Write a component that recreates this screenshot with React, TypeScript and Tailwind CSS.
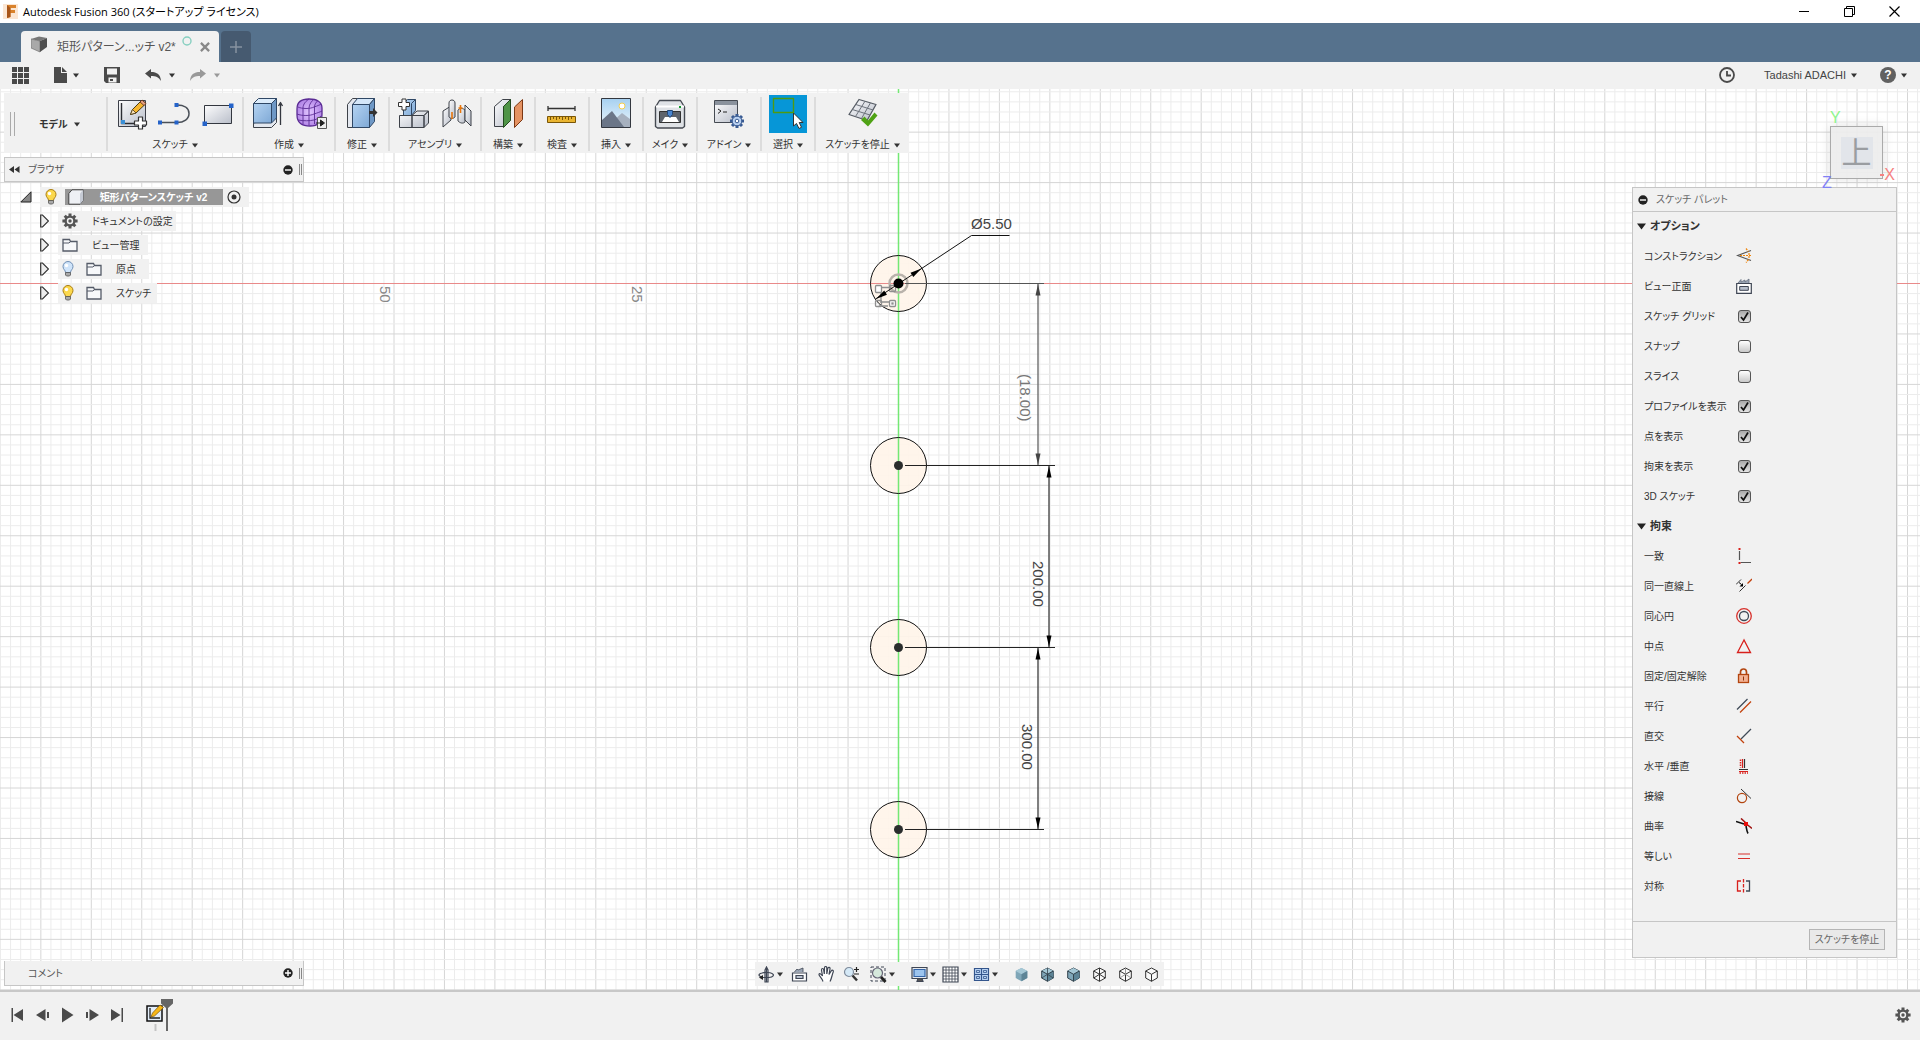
import React from "react";

type Kids = { children?: React.ReactNode };

/* ---------- small shared pieces ---------- */

function Caret({ className = "text-[#333]" }: { className?: string }) {
  return (
    <svg width="6" height="5" viewBox="0 0 6 5" className={className} aria-hidden="true">
      <path d="M0 0.5h6L3 4.5z" fill="currentColor" />
    </svg>
  );
}

function Gear({ size = 16, color = "#555" }: { size?: number; color?: string }) {
  return (
    <svg width={size} height={size} viewBox="0 0 16 16" aria-hidden="true">
      <g stroke={color} strokeWidth="3">
        <path d="M8 0.4v15.2M0.4 8h15.2M2.7 2.7l10.6 10.6M13.3 2.7L2.7 13.3" />
      </g>
      <circle cx="8" cy="8" r="4.4" fill="#f1f1f1" stroke={color} strokeWidth="2.4" />
      <circle cx="8" cy="8" r="1.7" fill={color} />
    </svg>
  );
}

function RoundSign({ plus }: { plus?: boolean }) {
  return (
    <svg width="10" height="10" viewBox="0 0 10 10" aria-hidden="true">
      <circle cx="5" cy="5" r="4.7" fill="#222" />
      <path d={plus ? "M2 5h6M5 2v6" : "M2 5h6"} stroke="#fff" strokeWidth="1.4" />
    </svg>
  );
}

function Grip() {
  return <span className="h-[11px] w-[3px] border-x border-[#888]" />;
}

/* ---------- ribbon icons ---------- */

function Icon32({ children }: Kids) {
  return (
    <svg width="34" height="34" viewBox="0 0 34 34" aria-hidden="true" strokeLinejoin="round">
      {children}
    </svg>
  );
}

function Gradients() {
  return (
    <svg width="0" height="0" className="absolute" aria-hidden="true">
      <defs>
        <linearGradient id="steel" x1="0" y1="0" x2="1" y2="1">
          <stop offset="0" stopColor="#fdfdfe" />
          <stop offset="1" stopColor="#b9bec9" />
        </linearGradient>
        <linearGradient id="blue" x1="0" y1="0" x2="1" y2="1">
          <stop offset="0" stopColor="#b4d3f2" />
          <stop offset="1" stopColor="#7fa9d6" />
        </linearGradient>
        <linearGradient id="sky" x1="0" y1="0" x2="0" y2="1">
          <stop offset="0" stopColor="#a6d0f0" />
          <stop offset="1" stopColor="#eef7fc" />
        </linearGradient>
        <radialGradient id="violet">
          <stop offset="0" stopColor="#e2c6ff" />
          <stop offset="1" stopColor="#b488e8" />
        </radialGradient>
      </defs>
    </svg>
  );
}

const SketchIcon = () => (
  <Icon32>
    <rect x="3.5" y="3.5" width="27" height="26" fill="url(#steel)" stroke="#3c3f48" />
    <path d="M6.5 6v20.5H28" fill="none" stroke="#2b2d33" strokeWidth="1.4" />
    <rect x="6" y="23" width="4" height="4" fill="#3a8fd6" />
    <path d="M15.5 17.5l2-5L27 3l4 3.5-10 9.5z" fill="#f5b52e" stroke="#4b3a12" />
    <path d="M25 5l4 3.5L31 6.500 27 3z" fill="#e7a183" stroke="#5b2d1b" strokeWidth=".8" />
    <path d="M15.5 17.5l2-5 3.5 3.5z" fill="#fbe3bb" stroke="#4b3a12" strokeWidth=".8" />
    <path d="M23.5 20h4v4h4v4h-4v4h-4v-4h-4v-4h4z" fill="#fff" stroke="#333" strokeWidth="1.2" />
  </Icon32>
);

const LineArcIcon = () => (
  <Icon32>
    <path d="M2 25.5h17M19 8c7 0 12 3 12 8.500s-5 9-12 9" fill="none" stroke="#4a5058" strokeWidth="1.5" />
    <path d="M0 23.5h4v4H0zM16.5 23.5h4v4h-4zM16.5 6h4v4h-4z" fill="#2563c9" />
  </Icon32>
);

const RectIcon = () => (
  <Icon32>
    <rect x="3.5" y="8.5" width="27" height="18" fill="url(#steel)" stroke="#33373f" />
    <path d="M1.5 24.5h4.500V29H1.500zM28 6.500h4.500V11H28z" fill="#2563c9" />
  </Icon32>
);

const ExtrudeIcon = () => (
  <Icon32>
    <path d="M2.5 26v4.500h18l5-5V21z" fill="#e4e8ef" stroke="#3d4148" />
    <path d="M2.5 6.500l5-5h18l-5 5z" fill="#dcecfb" stroke="#2f4765" />
    <path d="M2.5 6.500h18V26h-18z" fill="url(#blue)" stroke="#2f4765" />
    <path d="M20.5 6.500l5-5V21l-5 5z" fill="#6e98c6" stroke="#2f4765" />
    <path d="M29.5 28V7M27.5 9l2-3.5 2 3.5" fill="none" stroke="#33373f" strokeWidth="1.3" />
  </Icon32>
);

const FormIcon = () => (
  <Icon32>
    <path d="M3 12c0-7 4-10 12-10s13 3 13 9v6c0 8-4 12-12 12S3 26 3 18z" fill="url(#violet)" stroke="#5a2b94" strokeWidth="1.3" />
    <path d="M4 10c4 2 12 2 16 0 3-1 6-2 7-3M3 17c5 2 13 2 17 0 3-1 6-2 8-3M4 23c5 1 12 1 16 0 3-1 5-2 7-4M9 27V11c0-4 3-7 6-9M15 28V11c0-4 3-7 5-9M20.5 27V10c0-3 2-5 3-6" fill="none" stroke="#5a2b94" strokeWidth=".9" />
    <rect x="23.5" y="20.5" width="9" height="11" fill="#eee" stroke="#555" />
    <path d="M22 26h5M26.5 23l4 3-4 3z" fill="#222" stroke="#222" />
  </Icon32>
);

const PressPullIcon = () => (
  <Icon32>
    <path d="M2.500 7.500l5-6h6l-5 6v23h-6z" fill="#e4e8ef" stroke="#3d4148" />
    <path d="M7.500 7.500l5-6h17l-5 6z" fill="#d4e6f8" stroke="#2f4765" />
    <path d="M7.500 7.500h17v23h-17z" fill="url(#blue)" stroke="#2f4765" />
    <path d="M24.500 7.500l5-6v23l-5 6z" fill="#6e98c6" stroke="#2f4765" />
    <path d="M24 14h4v-3l4.500 4.500L28 20v-3h-4z" fill="#333" />
  </Icon32>
);

const ComponentIcon = () => (
  <Icon32>
    <path d="M6.500 6.500l4-4h8v11l-4 5h-8z" fill="url(#blue)" stroke="#2f4765" />
    <path d="M14.500 6.500l4-4M14.500 6.500v12" fill="none" stroke="#2f4765" />
    <path d="M2.500 18.500h12.500v12H2.500zM15 18.500l5-4.500h11.500l-4.500 4.500zM15 18.500h12v12H15zM27 18.500l4.500-4.500v12l-4.500 4.500z" fill="url(#steel)" stroke="#3d4148" />
    <path d="M5 2h4v3.500h3.500v4H9V13H5V9.500H1.500v-4H5z" fill="#fff" stroke="#333" />
  </Icon32>
);

const JointIcon = () => (
  <Icon32>
    <path d="M3 14l8-5v14l-8 7z" fill="url(#steel)" stroke="#3d4148" />
    <path d="M9 6c0-4 6-4 6 0v14c-2 2-4 2-6 0z" fill="url(#steel)" stroke="#3d4148" />
    <path d="M18 13c2-2 5-2 7 0v12c-2 2-5 1-7-1z" fill="url(#steel)" stroke="#3d4148" />
    <path d="M25 8l6 6v15l-6-6z" fill="url(#steel)" stroke="#3d4148" />
    <path d="M12 15v7M20.500 8v8M18.500 11h4" stroke="#e8760c" strokeWidth="1.600" />
  </Icon32>
);

const PlaneIcon = () => (
  <Icon32>
    <path d="M3.500 9.500l8-7h8l-7 7v20h-9z" fill="url(#steel)" stroke="#3d4148" />
    <path d="M12.500 9.500l7-7v21l-7 7z" fill="#4f9447" stroke="#23491f" />
    <path d="M23.500 10l8-7.500v20l-8 8z" fill="#e59363" stroke="#7c3713" />
  </Icon32>
);

const MeasureIcon = () => (
  <Icon32>
    <path d="M3 11.500h27M3 9v5M30 9v5" stroke="#333" strokeWidth="1.300" />
    <rect x="2.500" y="19.500" width="28" height="6" fill="#eab531" stroke="#7a5607" />
    <path d="M5.500 20v3M8.500 20v2M11.500 20v3M14.500 20v2M17.500 20v3M20.500 20v2M23.500 20v3M26.500 20v2" stroke="#7a5607" />
  </Icon32>
);

const ImageIcon = () => (
  <Icon32>
    <rect x="2.500" y="1.500" width="29" height="29" fill="url(#sky)" stroke="#33373f" />
    <circle cx="23" cy="9" r="3" fill="#fff" stroke="#f5ce4e" />
    <path d="M14 24l9-8 8 6v8H14z" fill="#a7b1bf" />
    <path d="M3 23l10-9 12 16H3z" fill="#6b7688" />
  </Icon32>
);

const PrintIcon = () => (
  <Icon32>
    <path d="M2.500 10l4-6.500h21l4 6.500v19.500l-2 1.500h-25l-2-1.500z" fill="#dfe2e6" stroke="#454a52" strokeWidth="1.400" />
    <path d="M3 9.500h28" stroke="#fff" strokeWidth="2" />
    <path d="M6.500 14.500h21v11h-21z" fill="#5e646d" stroke="#333" />
    <path d="M9 25l3-5h11l3 5z" fill="#fff" />
    <path d="M14.500 13.500h5v4l-2.500 3-2.500-3z" fill="#4a86d0" stroke="#234878" />
    <rect x="26" y="9" width="2" height="2" fill="#119a2c" />
  </Icon32>
);

const AddinIcon = () => (
  <Icon32>
    <rect x="2.500" y="3.500" width="23" height="22" fill="url(#steel)" stroke="#454a52" />
    <rect x="3" y="4" width="22" height="4" fill="#8a929d" />
    <path d="M6 12l3 2-3 2.500M11 15h4" fill="none" stroke="#222" />
    <g stroke="#395b93" strokeWidth="3">
      <path d="M25 17v14M18 24h14M20 19l10 10M30 19L20 29" />
    </g>
    <circle cx="25" cy="24" r="4.800" fill="#b9d0f0" stroke="#395b93" />
    <circle cx="25" cy="24" r="1.800" fill="#fff" stroke="#395b93" />
  </Icon32>
);

const SelectIcon = () => (
  <Icon32>
    <rect x="2.500" y="1.500" width="20" height="14" fill="none" stroke="#4f9a10" strokeWidth="1.400" />
    <path d="M22.500 16v13l3-2.500 2.500 5 2.500-1.200-2.300-4.800h3.800z" fill="#fff" stroke="#333" />
  </Icon32>
);

const StopSketchIcon = () => (
  <Icon32>
    <path d="M13 2.500l17 5-9 16-18-6z" fill="url(#steel)" stroke="#555b64" strokeWidth="1.300" />
    <path d="M9.800 7.500L27 13M6.300 12.500L24 18M19 4.200L9.500 19.500M24.500 5.800L15.500 21.500" stroke="#6c727b" fill="none" />
    <path d="M15 23l3.500-3.500 3.500 4 6.500-8 3 3-9.500 11z" fill="#4fa214" />
  </Icon32>
);

/* ---------- ribbon ---------- */

const groups: { label: string; width: string; on?: boolean; icons: React.FC[] }[] = [
  { label: "スケッチ", width: "w-[136px]", icons: [SketchIcon, LineArcIcon, RectIcon] },
  { label: "作成", width: "w-[92px]", icons: [ExtrudeIcon, FormIcon] },
  { label: "修正", width: "w-[54px]", icons: [PressPullIcon] },
  { label: "アセンブリ", width: "w-[92px]", icons: [ComponentIcon, JointIcon] },
  { label: "構築", width: "w-[54px]", icons: [PlaneIcon] },
  { label: "検査", width: "w-[54px]", icons: [MeasureIcon] },
  { label: "挿入", width: "w-[54px]", icons: [ImageIcon] },
  { label: "メイク", width: "w-[54px]", icons: [PrintIcon] },
  { label: "アドイン", width: "w-[64px]", icons: [AddinIcon] },
  { label: "選択", width: "w-[54px]", on: true, icons: [SelectIcon] },
  { label: "スケッチを停止", width: "w-[95px]", icons: [StopSketchIcon] },
];

function Ribbon() {
  return (
    <div className="mt-1 ml-1 flex h-[60px] bg-[#f1f1f1] pt-1 pb-0.5">
      <div className="flex w-[102px] items-center pl-1.5">
        <span className="h-6 w-[5px] border-x border-[#aaa]" />
        <button className="ml-6 flex items-center gap-1.5 text-[10px] font-bold">
          モデル <Caret />
        </button>
      </div>
      {groups.map((g) => (
        <div
          key={g.label}
          className={`flex flex-col items-center justify-between border-l-2 border-[#dcdcdc] ${g.width}`}
        >
          <div className="-mt-0.5 flex gap-[5px]">
            {g.icons.map((I, i) => (
              <button
                key={i}
                aria-label={g.label}
                className={`flex size-[38px] items-center justify-center ${g.on ? "bg-[#0696d7]" : ""}`}
              >
                <I />
              </button>
            ))}
          </div>
          <button className="flex items-center gap-1 text-[10px] leading-3 whitespace-nowrap">
            {g.label} <Caret />
          </button>
        </div>
      ))}
    </div>
  );
}

function ViewCube() {
  return (
    <div className="relative mt-[37px] mr-[37px] size-[53px]">
      <button className="flex size-full items-center justify-center border border-[#aaa] bg-[#ececec]/90 shadow-[0_0_10px_rgba(0,0,0,0.12)]">
        <span className="flex size-8 items-center justify-center bg-[#e2e5ea] text-[30px] leading-none text-[#9a9da1]">上</span>
      </button>
      <span className="absolute -top-4 left-0 text-base leading-4 text-[#8df58d]">Y</span>
      <span className="absolute -bottom-3 -left-2 text-base leading-4 text-[#8181f5]">Z</span>
      <span className="absolute -right-3 -bottom-1 text-base leading-4 text-[#f58181]">
        <i className="absolute top-[7px] -left-1 h-0.5 w-1 bg-[#f58181]" />X
      </span>
    </div>
  );
}

/* ---------- sketch canvas ---------- */

const OX = 898.5;
const OY = 283.5;
const STEP = 10.09;
const range = (a: number, b: number) => Array.from({ length: b - a + 1 }, (_, i) => a + i);

function Arrow({ x, y, angle, fill = "#000" }: { x: number; y: number; angle: number; fill?: string }) {
  return <path d="M0 0L-2.500 11.500H2.500z" fill={fill} transform={`translate(${x} ${y}) rotate(${angle})`} />;
}

function SketchCanvas() {
  const cols = range(-89, 180);
  const rows = range(-20, 130);
  return (
    <svg className="absolute inset-0 size-full" aria-label="スケッチ">
      <g transform="translate(0 -89)">
        {cols.map((c) => (
          <path key={c} d={`M${OX + c * STEP} 0V1600`} stroke={c % 5 ? "#ececec" : "#d6d6d6"} />
        ))}
        {rows.map((r) => (
          <path key={r} d={`M0 ${OY + r * STEP}H2800`} stroke={r % 5 ? "#ececec" : "#d6d6d6"} />
        ))}
        {[283.5, 465.5, 647.5, 829.5].map((y) => (
          <circle key={y} cx={OX} cy={y} r="28" fill="#fff4e9" fillOpacity=".9" />
        ))}
        <path d="M0 283.500H2800" stroke="#e98a8a" />
        <path d="M898.500 0V1600" stroke="#74e874" strokeWidth="1.500" />
        {[283.5, 465.5, 647.5, 829.5].map((y) => (
          <circle key={y} cx={OX} cy={y} r="28" fill="none" stroke="#111" />
        ))}
        {[465.5, 647.5, 829.5].map((y) => (
          <circle key={y} cx={OX} cy={y} r="4.500" fill="#2a2d2d" />
        ))}

        <g fill="none" stroke="#8f8f8f" strokeWidth="1.300">
          <circle cx={OX} cy={OY} r="9" stroke="#b9b2ab" strokeWidth="2.500" />
          <path d="M881 287.500h10M881 291v10M880 302h10M879 306h9" />
          <rect x="875.500" y="285.500" width="6" height="7" rx="1" fill="#fff" />
          <rect x="889.500" y="285.500" width="6" height="6" rx="1" />
          <rect x="875.500" y="300.500" width="6" height="6" rx="1" />
          <rect x="889.500" y="300.500" width="6" height="6" rx="1" fill="#fff" />
          <rect x="892" y="303" width="1" height="1" />
        </g>
        <path d="M875.500 299L971.500 235.500H1009.500" fill="none" stroke="#111" />
        <Arrow x={921.5} y={268.5} angle={56.5} />
        <Arrow x={876} y={299} angle={236.5} />
        <circle cx={OX} cy={OY} r="5" fill="#000" />

        <g stroke="#222">
          <path d="M905 283.500h139" stroke="#555" />
          <path d="M905 465.500h150M905 647.500h150M905 829.500h139" />
          <path d="M1038 284v181" stroke="#777" strokeWidth="1.500" />
          <path d="M1049 466v181M1038 648v181" stroke="#555" strokeWidth="1.500" />
        </g>
        <Arrow x={1038} y={284} angle={0} fill="#444" />
        <Arrow x={1038} y={465} angle={180} fill="#444" />
        <Arrow x={1049} y={466} angle={0} />
        <Arrow x={1049} y={647} angle={180} />
        <Arrow x={1038} y={648} angle={0} />
        <Arrow x={1038} y={829} angle={180} />

        <g fontSize="15" fill="#444">
          <text x="971" y="229">Ø5.50</text>
          <text transform="translate(1020 374) rotate(90)" fill="#777">(18.00)</text>
          <text transform="translate(1033 561) rotate(90)">200.00</text>
          <text transform="translate(1022 724) rotate(90)">300.00</text>
          <text transform="translate(380 286) rotate(90)" fill="#888">50</text>
          <text transform="translate(632 286) rotate(90)" fill="#888">25</text>
        </g>
      </g>
    </svg>
  );
}

/* ---------- browser tree ---------- */

const Folder = () => (
  <svg width="16" height="14" viewBox="0 0 16 14" aria-hidden="true">
    <path d="M1 13V1.500h6.500l1 2H15V13z" fill="#f7f8fa" stroke="#555b68" strokeWidth="1.300" />
    <path d="M1 5h6l1.500-1.500" fill="none" stroke="#555b68" />
  </svg>
);

const Bulb = ({ on }: { on?: boolean }) => (
  <svg width="12" height="16" viewBox="0 0 12 16" aria-hidden="true">
    <path d="M3.500 11.500C3.500 9 1 8.500 1 5.500a5 5 0 0110 0c0 3-2.500 3.500-2.500 6z" fill={on ? "#fbd84d" : "#cfe4fa"} stroke={on ? "#a97c12" : "#6f8fb5"} />
    <circle cx="4.500" cy="4.500" r="1.700" fill="#fff" />
    <path d="M3.500 11.500h5v2.500l-1 1h-3l-1-1z" fill="#aaa" stroke="#555" strokeWidth=".8" />
  </svg>
);

const Expander = () => (
  <button aria-label="展開" className="mr-2.5 flex w-2">
    <svg width="9" height="14" viewBox="0 0 9 14" className="shrink-0" aria-hidden="true">
      <path d="M.7 1h1.800l6 6-6 6H.7z" fill="#eee" stroke="#333" strokeWidth="1.200" />
    </svg>
  </button>
);

const rowsTree = [
  { label: "ドキュメントの設定", icons: <Gear />, width: "w-[118px]" },
  { label: "ビュー管理", icons: <Folder />, width: "w-[90px]" },
  { label: "原点", icons: <><Bulb /><Folder /></>, width: "w-[91px]" },
  { label: "スケッチ", icons: <><Bulb on /><Folder /></>, width: "w-[99px]" },
];

function BrowserTree() {
  return (
    <ul className="mt-[5px] flex flex-col gap-1 text-[10px]">
      <li className="flex h-5 items-center pl-4">
        <button aria-label="折りたたむ" className="mr-2 w-3">
          <svg width="12" height="12" viewBox="0 0 12 12" aria-hidden="true">
            <path d="M11 .8V11H.8z" fill="#888" stroke="#222" />
          </svg>
        </button>
        <div className="flex h-5 items-center bg-[#f1f1f1] pr-2 pl-[5px]">
          <Bulb on />
          <div className="ml-2 flex h-4 w-[158px] items-center bg-[#979797] pl-[3px] font-bold text-white">
            <svg width="16" height="16" viewBox="0 0 16 16" aria-hidden="true">
              <path d="M.8 4.500L4 .8h11.200v10.700L12 15.200H.8z" fill="#eef0f4" stroke="#444" />
              <path d="M12 4.500l3.200-3.700v10.700L12 15.200z" fill="#c5cad4" />
            </svg>
            <span className="flex-1 text-center whitespace-nowrap">矩形パターンスケッチ v2</span>
          </div>
          <svg className="ml-1" width="14" height="14" viewBox="0 0 14 14" aria-hidden="true">
            <circle cx="7" cy="7" r="6" fill="none" stroke="#333" strokeWidth="1.200" />
            <circle cx="7" cy="7" r="2.500" fill="#333" />
          </svg>
        </div>
      </li>
      {rowsTree.map((r) => (
        <li key={r.label} className="flex h-5 items-center pl-9">
          <Expander />
          <div className={`flex h-5 items-center gap-3 bg-[#f1f1f1] pl-1 whitespace-nowrap ${r.width}`}>
            {r.icons}
            <span className="pl-0.5">{r.label}</span>
          </div>
        </li>
      ))}
    </ul>
  );
}

/* ---------- sketch palette ---------- */

function Icon16({ children }: Kids) {
  return (
    <svg width="16" height="16" viewBox="0 0 16 16" fill="none" aria-hidden="true">
      {children}
    </svg>
  );
}

const FaceIcon = () => (
  <Icon16>
    <path d="M.7 5.500h14.600v9.800H.7z" fill="#fff" stroke="#3f4654" strokeWidth="1.200" />
    <path d="M3.700 8.500h8.600v3.800H3.700z" fill="#b7bfcc" stroke="#3f4654" />
    <path d="M2 5l3-3.500V4l4-2v2l4-3v4" fill="#9aa5b5" stroke="#667080" strokeWidth=".8" />
  </Icon16>
);

const options: { label: string; icon?: React.ReactNode; checked?: boolean }[] = [
  {
    label: "コンストラクション",
    icon: (
      <Icon16>
        <path d="M15 2.500L1.500 7.500 15 12.500" stroke="#555" strokeWidth="1.200" />
        <path d="M4 7.500h12" stroke="#f0860c" strokeWidth="1.200" strokeDasharray="2 1" />
        <path d="M10 .5l2.500 3M12.500 11.500L10 14.500M13 5v5" stroke="#f0860c" strokeWidth="1.200" strokeDasharray="2 1" />
      </Icon16>
    ),
  },
  { label: "ビュー正面", icon: <FaceIcon /> },
  { label: "スケッチ グリッド", checked: true },
  { label: "スナップ", checked: false },
  { label: "スライス", checked: false },
  { label: "プロファイルを表示", checked: true },
  { label: "点を表示", checked: true },
  { label: "拘束を表示", checked: true },
  { label: "3D スケッチ", checked: true },
];

const constraints: { label: string; art: React.ReactNode }[] = [
  {
    label: "一致",
    art: (
      <>
        <path d="M3.500 3v9M4.500 14.500H15" stroke="#555" strokeWidth="1.200" />
        <path d="M2.500 0h2v2h-2zM2.500 14h2v2h-2z" fill="#d8201c" />
      </>
    ),
  },
  {
    label: "同一直線上",
    art: (
      <>
        <path d="M0 6.500l5-5M3.500 13.500l6-6" stroke="#333" />
        <path d="M11.500 5.500l4.500-4.500" stroke="#c2410c" strokeWidth="1.300" />
        <path d="M3 4.500l2.500 2" stroke="#000" />
        <path d="M7 5v3.500H3.500z" fill="#000" />
      </>
    ),
  },
  {
    label: "同心円",
    art: (
      <>
        <circle cx="8" cy="8" r="7.300" stroke="#d8312c" strokeWidth="1.300" />
        <circle cx="8" cy="8" r="4.500" stroke="#3f4a57" strokeWidth="1.300" />
      </>
    ),
  },
  { label: "中点", art: <path d="M8 2L1.500 14.500h13z" stroke="#d8201c" strokeWidth="1.300" /> },
  {
    label: "固定/固定解除",
    art: (
      <>
        <path d="M4.500 7V4c0-4 6-4 6 0v3" stroke="#b3450f" strokeWidth="1.700" />
        <rect x="2.500" y="6.500" width="10" height="8" fill="#f3b193" stroke="#b3450f" strokeWidth="1.300" />
        <path d="M7.500 8.500v4" stroke="#8f3308" />
      </>
    ),
  },
  {
    label: "平行",
    art: (
      <>
        <path d="M1 11.500L11.500 1" stroke="#3f4a57" strokeWidth="1.200" />
        <path d="M4 14.500L15 3.500" stroke="#c2410c" strokeWidth="1.200" />
      </>
    ),
  },
  {
    label: "直交",
    art: (
      <>
        <path d="M5 11L15 1" stroke="#3f4a57" strokeWidth="1.200" />
        <path d="M1 8l7 7" stroke="#c2410c" strokeWidth="1.300" />
      </>
    ),
  },
  {
    label: "水平 /垂直",
    art: (
      <>
        <path d="M8.500 1v9M3 11.500h9" stroke="#333" strokeWidth="1.200" />
        <path d="M6.500 1v9M3 13.500h9" stroke="#d8201c" strokeWidth="1.200" />
        <path d="M4.500 1.500v8M3.500 15h8.500" stroke="#d8201c" strokeWidth="1.500" strokeDasharray="1.500 1" />
      </>
    ),
  },
  {
    label: "接線",
    art: (
      <>
        <circle cx="6" cy="10" r="4.600" stroke="#b3450f" strokeWidth="1.200" />
        <path d="M5 1l10 9.500" stroke="#333" />
      </>
    ),
  },
  {
    label: "曲率",
    art: (
      <>
        <path d="M0 3.500l8 2.500M10 8c.5 2 .500 5 2 7.500" stroke="#111" strokeWidth="1.600" />
        <path d="M5 .5l5 4.500M11 6.500l5 4" stroke="#a01512" strokeWidth="1.600" />
        <path d="M8 4h4v4H8z" fill="#e80e0a" />
      </>
    ),
  },
  { label: "等しい", art: <path d="M2 6h12M2 10.500h12" stroke="#d8312c" strokeWidth="1.200" /> },
  {
    label: "対称",
    art: (
      <>
        <path d="M5 3H1.500v10H5" stroke="#d8201c" strokeWidth="1.300" />
        <path d="M10 3h3.500v10H10" stroke="#3f4a57" strokeWidth="1.300" />
        <path d="M7.500 1v14" stroke="#d8201c" strokeWidth="1.300" strokeDasharray="3.500 1.500" />
      </>
    ),
  },
];

function Check({ id, checked }: { id: string; checked: boolean }) {
  return (
    <span className="relative flex size-4 items-center justify-center">
      <input
        id={id}
        type="checkbox"
        defaultChecked={checked}
        className="peer size-[13px] appearance-none rounded-[3px] border border-[#555] bg-linear-to-b from-white to-[#c9c9c9] checked:from-[#aaa] checked:to-[#e4e4e4]"
      />
      <svg className="pointer-events-none absolute hidden peer-checked:block" width="11" height="11" viewBox="0 0 11 11" aria-hidden="true">
        <path d="M2 6l2.500 3L9 1.500" fill="none" stroke="#111" strokeWidth="1.700" />
      </svg>
    </span>
  );
}

function SectionTitle({ children }: Kids) {
  return (
    <h2 className="h-[30px] text-[11px] font-bold">
      <button className="flex h-full items-center gap-1 pl-1">
        <svg width="9" height="7" viewBox="0 0 9 7" aria-hidden="true">
          <path d="M0 .5h9L4.500 6.500z" fill="#222" />
        </svg>
        {children}
      </button>
    </h2>
  );
}

const rowClass = "flex h-[30px] items-center pl-[11px]";
const labelClass = "w-[92px] whitespace-nowrap";

function Palette() {
  return (
    <section className="mt-[34px] mr-[23px] mb-7 flex w-[265px] flex-col self-stretch border border-[#c6c6c6] bg-[#f1f1f1] text-[10px]">
      <header className="flex h-6 shrink-0 items-center gap-2 border-b border-[#c6c6c6] pl-[5px] text-[#666]">
        <button aria-label="閉じる"><RoundSign /></button>
        スケッチ パレット
      </header>
      <div className="-mt-px flex-1 overflow-hidden">
        <SectionTitle>オプション</SectionTitle>
        {options.map((o, i) => (
          <div key={o.label} className={rowClass}>
            <label htmlFor={`opt${i}`} className={labelClass}>{o.label}</label>
            {o.icon ? (
              <button id={`opt${i}`}>{o.icon}</button>
            ) : (
              <Check id={`opt${i}`} checked={!!o.checked} />
            )}
          </div>
        ))}
        <SectionTitle>拘束</SectionTitle>
        {constraints.map((c, i) => (
          <div key={c.label} className={rowClass}>
            <label htmlFor={`con${i}`} className={labelClass}>{c.label}</label>
            <button id={`con${i}`}><Icon16>{c.art}</Icon16></button>
          </div>
        ))}
      </div>
      <footer className="flex h-9 shrink-0 items-center justify-end border-t border-[#c6c6c6] pr-[11px]">
        <button className="h-[21px] w-[76px] border border-[#b5b5b5] bg-[#e9e9e9] text-[10px] whitespace-nowrap text-[#666]">
          スケッチを停止
        </button>
      </footer>
    </section>
  );
}

/* ---------- navigation bar ---------- */

function NavIcon({ children }: Kids) {
  return (
    <svg width="17" height="17" viewBox="0 0 17 17" fill="none" stroke="#3f4654" strokeWidth="1.200" aria-hidden="true">
      {children}
    </svg>
  );
}

function NavItem({ label, caret, className, children }: Kids & { label: string; caret?: boolean; className: string }) {
  return (
    <button aria-label={label} className={`flex h-full shrink-0 items-center ${className}`}>
      <NavIcon>{children}</NavIcon>
      {caret && <span className="ml-0.5"><Caret /></span>}
    </button>
  );
}

const hexPath = "M8.500 2l5.800 3v7l-5.800 3.300L2.700 12V5z";

function NavBar() {
  return (
    <nav className="mr-[17px] flex h-6 w-[409px] items-center bg-[#f1f1f1] pl-[3px]">
      <NavItem label="オービット" caret className="w-[33px]">
        <path d="M8.500 1v15M7 4l1.500-3L10 4v12H7z" fill="#fff" />
        <path d="M4 11c-4-1-4-3 0-4 3-1 8-.5 10 .5 3 1.500 1 3.500-3 4H4" />
        <path d="M1 11.500l4-2.500v5z" fill="#222" stroke="none" />
      </NavItem>
      <NavItem label="ビュー正面" className="w-[27px]">
        <path d="M1.500 7h14v8h-14z" fill="#fff" />
        <path d="M5 9.500h7v3H5z" fill="#b7bfcc" />
        <path d="M3 6.500L6 3l1 1 5-2v4" fill="#9aa5b5" strokeWidth=".8" />
      </NavItem>
      <NavItem label="画面移動" className="w-[25px]">
        <path d="M5 15.500C4 12 1 10 1 8.500s2-1 3.500 1.500L3.500 4c0-2 2-2 2.200 0l.6 4L6.500 2c0-2 2.300-2 2.300 0v6l1-5.500c.5-2 2.500-1.300 2.200.5L11 8.500l2.200-3.500c1-1.500 2.500-.5 2 1C14 9 13.500 13 12 15.500" fill="#fff" />
      </NavItem>
      <NavItem label="ズーム" className="w-[27px]">
        <circle cx="6" cy="6" r="4.500" fill="#d5e9f7" stroke="#7f8c9c" />
        <path d="M9.500 9.500l4.500 5" stroke="#333" strokeWidth="2.500" />
        <path d="M11 3.500h5M13.500 1v5M11 8h5" stroke="#222" />
      </NavItem>
      <NavItem label="ウィンドウ ズーム" caret className="w-[41px]">
        <path d="M1 1h14v14H1z" strokeDasharray="3 2" strokeWidth="1" />
        <circle cx="7.500" cy="7" r="5" fill="#d5e9dc" stroke="#667" />
        <path d="M11 11l4.500 5" stroke="#222" strokeWidth="2.800" />
      </NavItem>
      <NavItem label="表示設定" caret className="w-[31px]">
        <path d="M1 1.500h15v11H1z" fill="#e6e9ee" />
        <path d="M3 3.500h11v7H3z" fill="#9cc4ee" stroke="#3465a8" />
        <path d="M6 15.500h6l-1-3H7z" fill="#555" />
      </NavItem>
      <NavItem label="グリッドとスナップ" caret className="w-[31px]">
        <path d="M1 1h15v15H1z" fill="#fff" />
        <path d="M4 1v15M7 1v15M10 1v15M13 1v15M1 4h15M1 7h15M1 10h15M1 13h15" strokeWidth=".8" />
      </NavItem>
      <NavItem label="ビューポート" caret className="w-10">
        <g fill="#b9d3f3" stroke="#33558c">
          <path d="M1.500 2.500h7v6h-7zM8.500 2.500h7v6h-7zM1.500 8.500h7v6h-7zM8.500 8.500h7v6h-7z" />
          <path d="M3.500 4.500h3v2h-3zM10.500 4.500h3v2h-3zM3.500 10.500h3v2h-3zM10.500 10.500h3v2h-3z" strokeWidth=".8" />
        </g>
      </NavItem>
      {[0, 1, 2].map((n) => (
        <NavItem key={n} label={["シェーディング", "シェーディング、非表示エッジ", "シェーディング、表示エッジ"][n]} className="w-[26px]">
          <path d={hexPath} fill="#7fa6b8" stroke={n ? "#33434d" : "none"} strokeWidth="1" />
          <path d="M2.700 5l5.800-3 5.800 3-5.800 3.300z" fill="#a5c8d6" stroke="none" />
          <path d="M8.500 8.300L14.300 5v7l-5.800 3.300z" fill="#5d8496" stroke="none" />
          {n > 0 && <path d="M2.700 5l5.800 3.300L14.300 5M8.500 8.300v7" stroke="#33434d" strokeWidth="1" />}
          {n === 1 && <path d="M8.500 2v6.300L2.700 12M8.500 8.300l5.800 3.700" stroke="#33434d" strokeWidth=".8" />}
        </NavItem>
      ))}
      {[0, 1, 2].map((n) => (
        <NavItem key={n} label={["ワイヤフレーム", "ワイヤフレーム、非表示エッジ", "ワイヤフレーム、表示エッジのみ"][n]} className="w-[26px]">
          <path d={hexPath} fill="#fafafa" stroke="#333" strokeWidth="1" />
          <path d="M2.700 5l5.800 3.300L14.300 5M8.500 8.300v7" stroke="#333" strokeWidth="1" />
          {n < 2 && <path d="M8.500 2v6.300L2.700 12M8.500 8.300l5.800 3.700" stroke={n ? "#999" : "#333"} strokeWidth="1" />}
        </NavItem>
      ))}
    </nav>
  );
}

/* ---------- window chrome ---------- */

function TitleBar() {
  return (
    <header className="flex h-[23px] shrink-0 items-center bg-white pl-[3px] text-black">
      <svg width="15" height="15" viewBox="0 0 15 15" aria-hidden="true">
        <rect width="15" height="15" fill="#fbe6d3" />
        <path d="M4 1h9v3H7.500v2H12v3H7.500v4L4 14z" fill="#d9822b" />
        <path d="M4 1l3.500 3v9L4 14z" fill="#a8561a" />
      </svg>
      <h1 className="ml-[5px] flex-1 pt-px font-['Open_Sans','Noto_Sans_CJK_JP',sans-serif] text-[11px]">Autodesk Fusion 360 (スタートアップ ライセンス)</h1>
      <div className="flex items-center gap-[34px] pr-5">
        <button aria-label="最小化">
          <svg width="11" height="11" viewBox="0 0 11 11"><path d="M0 5.500h10" stroke="#000" /></svg>
        </button>
        <button aria-label="元に戻す">
          <svg width="11" height="11" viewBox="0 0 11 11" fill="none" stroke="#000"><path d="M.5 2.500h8v8h-8zM2.500 2.500v-2h8v8h-2" /></svg>
        </button>
        <button aria-label="閉じる">
          <svg width="11" height="11" viewBox="0 0 11 11"><path d="M.5 .5l10 10M10.500 .5l-10 10" stroke="#000" strokeWidth="1.200" /></svg>
        </button>
      </div>
    </header>
  );
}

function TabStrip() {
  return (
    <div className="flex h-[39px] shrink-0 items-end gap-0.5 bg-[#56728d] pl-[21px]">
      <div className="flex h-[31px] w-[198px] items-center rounded-t-[4px] bg-[#f1f1f1] pl-2.5 text-[#555]">
        <svg width="16" height="17" viewBox="0 0 16 17" className="-mt-1" aria-hidden="true">
          <path d="M0 3L8 .5l8 1.500-7 3z" fill="#777" />
          <path d="M0 3l9 2v11L0 12z" fill="#a9a9a9" stroke="#666" strokeWidth=".6" />
          <path d="M9 5l7-3v9l-7 5z" fill="#4f4f4f" />
        </svg>
        <span className="ml-2.5 text-xs whitespace-nowrap">矩形パターン...ッチ v2*</span>
        <svg width="10" height="10" viewBox="0 0 10 10" className="mb-3 ml-auto" aria-hidden="true">
          <circle cx="5" cy="5" r="4" fill="none" stroke="#86cfc0" strokeWidth="1.400" />
        </svg>
        <button aria-label="タブを閉じる" className="mr-[9px] ml-2">
          <svg width="10" height="10" viewBox="0 0 11 11"><path d="M1 1l9 9M10 1l-9 9" stroke="#888" strokeWidth="2.500" /></svg>
        </button>
      </div>
      <button aria-label="新しいタブ" className="flex h-[31px] w-[30px] items-center justify-center rounded-t-[4px] bg-[#465a70]">
        <svg width="12" height="12" viewBox="0 0 12 12"><path d="M0 6h12M6 0v12" stroke="#8793a0" strokeWidth="1.500" /></svg>
      </button>
    </div>
  );
}

function QuickBar() {
  return (
    <div className="flex h-[27px] shrink-0 items-center bg-[#f1f1f1] pb-px pl-3 text-[#4a4a4a]">
      <button aria-label="データ パネル">
        <svg width="17" height="17" viewBox="0 0 17 17" fill="currentColor">
          <path d="M0 0h5v5H0zM6 0h5v5H6zM12 0h5v5h-5zM0 6h5v5H0zM6 6h5v5H6zM12 6h5v5h-5zM0 12h5v5H0zM6 12h5v5H6zM12 12h5v5h-5z" />
        </svg>
      </button>
      <button aria-label="ファイル" className="ml-[25px] flex items-center gap-1.5">
        <svg width="13" height="16" viewBox="0 0 13 16" fill="currentColor"><path d="M0 0h7v6h6v10H0zM8 0l5 5H8z" /></svg>
        <Caret />
      </button>
      <button aria-label="保存" className="ml-[25px]">
        <svg width="16" height="16" viewBox="0 0 16 16">
          <path d="M0 0h16v16H2l-2-2z" fill="currentColor" />
          <path d="M3 1.500h10v6H3zM4.500 10.500h8v5h-8z" fill="#f1f1f1" />
          <path d="M6 12h3v2H6z" fill="currentColor" />
        </svg>
      </button>
      <button aria-label="元に戻す" className="ml-[25px] flex items-center gap-2">
        <svg width="16" height="12" viewBox="0 0 16 12"><path d="M0 4.500L6 0v3c6 0 9.500 2.500 10 9-2.500-4-5-5-10-5v2.500z" fill="currentColor" /></svg>
        <Caret />
      </button>
      <button aria-label="やり直し" className="ml-[15px] flex items-center gap-2 text-[#999]">
        <svg width="16" height="12" viewBox="0 0 16 12"><path d="M16 4.500L10 0v3C4 3 .5 5.500 0 12c2.500-4 5-5 10-5v2.500z" fill="currentColor" /></svg>
        <Caret className="text-[#999]" />
      </button>
      <div className="ml-auto flex items-center pr-[13px]">
        <button aria-label="ジョブ ステータス">
          <svg width="16" height="16" viewBox="0 0 16 16" fill="none" stroke="currentColor">
            <circle cx="8" cy="8" r="7" strokeWidth="1.800" />
            <path d="M8 4v4.500h4" strokeWidth="1.800" />
          </svg>
        </button>
        <button className="ml-[29px] flex items-center gap-[5px] font-['Liberation_Sans',sans-serif] text-[11px] text-[#444]">
          Tadashi ADACHI <Caret />
        </button>
        <button aria-label="ヘルプ" className="ml-[23px] flex items-center gap-[5px]">
          <span className="flex size-4 items-center justify-center rounded-full bg-[#616161] text-xs leading-none font-bold text-white">?</span>
          <Caret />
        </button>
      </div>
    </div>
  );
}

function Timeline() {
  const controls: [string, string][] = [
    ["先頭へ", "M.5 1H2v14H.500zM12 2v12L2.500 8z"],
    ["前へ", "M0 8l9.500-6v12zM11 5h2v6h-2z"],
    ["再生", "M1 .5L12.500 8 1 15.500z"],
    ["次へ", "M0 5h2v6H0zM3.500 2l9.500 6-9.500 6z"],
    ["末尾へ", "M0 2l9.500 6L0 14zM10.500 1H12v14h-1.500z"],
  ];
  return (
    <footer className="flex h-[50px] shrink-0 items-center border-t-2 border-[#c8c8c8] bg-[#f1f1f1] pr-[9px] pb-0.5 pl-[11px]">
      <div className="flex gap-3 text-[#4a4a4a]">
        {controls.map(([name, d]) => (
          <button key={name} aria-label={name} className="flex w-[13px]">
            <svg width="13" height="16" viewBox="0 0 13 16"><path d={d} fill="currentColor" /></svg>
          </button>
        ))}
      </div>
      <button aria-label="スケッチ1" className="ml-[22px]">
        <svg width="28" height="34" viewBox="0 0 28 34">
          <rect x="1" y="8" width="15" height="15" fill="#e3eefa" stroke="#111" strokeWidth="1.500" />
          <path d="M4 10v10h10" fill="none" stroke="#222" strokeWidth="1.300" />
          <path d="M5 19l1.500-4L14 7l3.500 2.500L8.500 18z" fill="#f7b718" stroke="#795205" strokeWidth=".7" />
          <path d="M9.500 26v7" stroke="#c4c4c4" strokeWidth="2" />
          <path d="M15 1h12v4.500L22 10v23h-2V10l-5-4.500z" fill="#666" />
        </svg>
      </button>
      <button aria-label="設定" className="ml-auto"><Gear /></button>
    </footer>
  );
}

export default function App() {
  return (
    <div className="flex h-screen flex-col overflow-hidden bg-white font-['Liberation_Sans','Noto_Sans_CJK_JP',sans-serif] text-[#333] [font-feature-settings:'palt']">
      <Gradients />
      <TitleBar />
      <TabStrip />
      <QuickBar />
      <main className="relative min-h-0 flex-1">
        <SketchCanvas />
        <div className="relative flex h-full flex-col pb-1">
          <div className="flex h-16 items-start justify-between">
            <Ribbon />
            <ViewCube />
          </div>
          <div className="flex min-h-0 flex-1 items-end justify-between">
            <div className="ml-1 flex w-[300px] flex-col justify-between self-stretch pt-1">
              <div>
                <div className="flex h-[25px] items-center border border-[#c6c6c6] bg-[#f1f1f1] pr-px pl-1 text-[10px] text-[#555]">
                  <button aria-label="折りたたむ">
                    <svg width="11" height="7" viewBox="0 0 11 7"><path d="M5 0v7L0 3.500zM10.500 0v7l-5-3.500z" fill="#333" /></svg>
                  </button>
                  <span className="ml-2 flex-1">ブラウザ</span>
                  <button aria-label="最小化" className="mr-1.5"><RoundSign /></button>
                  <Grip />
                </div>
                <BrowserTree />
              </div>
              <div className="flex h-[25px] items-center border border-t-0 border-[#c6c6c6] bg-[#f1f1f1] pr-px pl-[23px] text-[10px] text-[#555]">
                <span className="flex-1">コメント</span>
                <button aria-label="コメントを追加" className="mr-1.5"><RoundSign plus /></button>
                <Grip />
              </div>
            </div>
            <NavBar />
            <Palette />
          </div>
        </div>
      </main>
      <Timeline />
    </div>
  );
}
